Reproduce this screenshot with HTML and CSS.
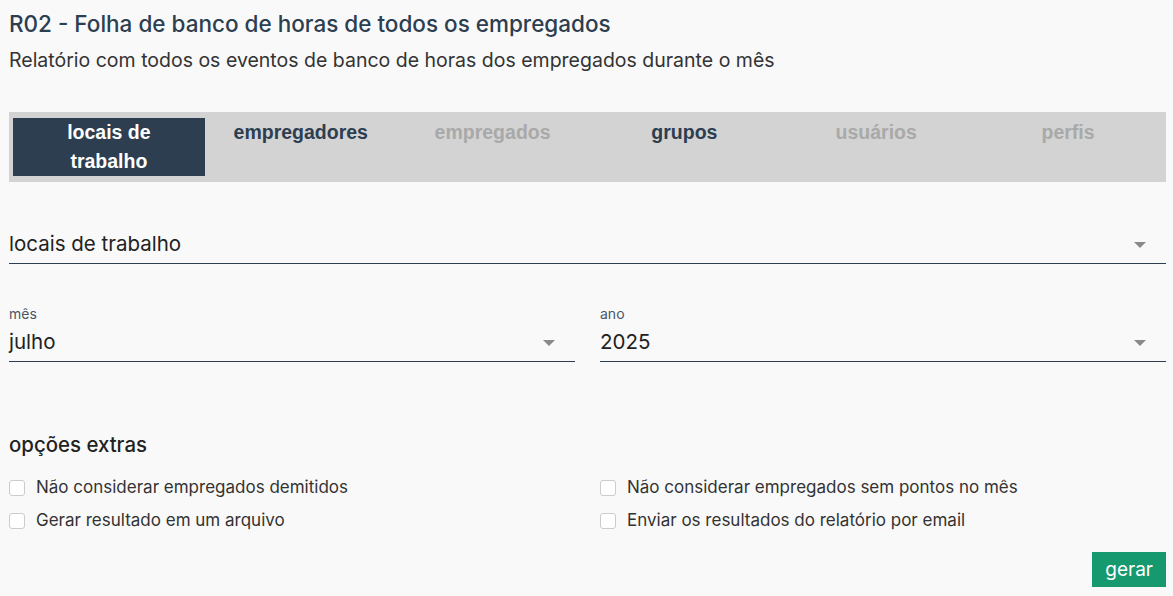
FILE: index.html
```html
<!DOCTYPE html>
<html lang="pt">
<head>
    <meta charset="UTF-8">
    <meta name="viewport" content="width=device-width, initial-scale=1.0">
    <title>R02 - Folha de banco de horas</title>
    <link rel="stylesheet" href="styles.css">
</head>
<body>
    <div class="page">
        <header class="header">
            <h1>R02 - Folha de banco de horas de todos os empregados</h1>
            <p>Relatório com todos os eventos de banco de horas dos empregados durante o mês</p>
        </header>

        <nav class="tabs">
            <div class="tab active">locais de trabalho</div>
            <div class="tab">empregadores</div>
            <div class="tab disabled">empregados</div>
            <div class="tab">grupos</div>
            <div class="tab disabled">usuários</div>
            <div class="tab disabled">perfis</div>
        </nav>

        <div class="field field-main">
            <div class="select">
                <span>locais de trabalho</span>
                <span class="arrow"></span>
            </div>
        </div>

        <div class="row">
            <div class="field">
                <label>mês</label>
                <div class="select">
                    <span>julho</span>
                    <span class="arrow"></span>
                </div>
            </div>
            <div class="field">
                <label>ano</label>
                <div class="select">
                    <span>2025</span>
                    <span class="arrow"></span>
                </div>
            </div>
        </div>

        <section class="extras">
            <h2>opções extras</h2>
            <div class="options">
                <label class="check"><span class="box"></span>Não considerar empregados demitidos</label>
                <label class="check"><span class="box"></span>Não considerar empregados sem pontos no mês</label>
                <label class="check"><span class="box"></span>Gerar resultado em um arquivo</label>
                <label class="check"><span class="box"></span>Enviar os resultados do relatório por email</label>
            </div>
        </section>

        <div class="actions">
            <button class="btn">gerar</button>
        </div>
    </div>
</body>
</html>
```

FILE: styles.css
```css
* {
    margin: 0;
    padding: 0;
    box-sizing: border-box;
}

body {
    font-family: Inter, 'Noto Sans', sans-serif;
    background: #f9f9f9;
    color: #333;
}

.page {
    padding: 8px 7px 0 9px;
}

/* cabeçalho */
.header h1 {
    font-size: 22.5px;
    font-weight: 500;
    color: #2c3e50;
    line-height: 32px;
}

.header p {
    font-size: 19.5px;
    line-height: 30px;
    margin-top: 5px;
    color: #333;
}

/* abas */
.tabs {
    display: flex;
    background: #d3d3d3;
    padding: 6px 2px 6px 4px;
    margin-top: 37px;
}

.tab {
    flex: 1 1 0;
    min-width: 0;
    text-align: center;
    font-family: 'Liberation Sans', Arial, sans-serif;
    font-weight: bold;
    font-size: 19.5px;
    line-height: 29px;
    color: #2c3e50;
    padding: 0 22px;
    min-height: 58px;
}

.tab.active {
    background: #2c3e50;
    color: #fff;
}

.tab.disabled {
    color: #a9a9a9;
}

/* campos */
.field-main {
    margin-top: 49px;
}

.select {
    display: flex;
    align-items: flex-end;
    justify-content: space-between;
    border-bottom: 1px solid #2c3e50;
    padding-bottom: 6px;
    font-size: 20.5px;
    line-height: 26px;
    color: #222;
}

.arrow {
    width: 0;
    height: 0;
    border-left: 6px solid transparent;
    border-right: 6px solid transparent;
    border-top: 6px solid #8a8a8a;
    margin: 0 20px 9px 0;
}

.row {
    display: flex;
    gap: 25px;
    margin-top: 41px;
}

.row .field {
    flex: 1;
}

.field label {
    display: block;
    font-size: 14px;
    color: #4a5568;
    line-height: 18px;
    margin-bottom: 6px;
}

/* opções extras */
.extras {
    margin-top: 70px;
}

.extras h2 {
    font-size: 20.4px;
    font-weight: 500;
    color: #222;
    line-height: 26px;
}

.options {
    display: grid;
    grid-template-columns: 1fr 1fr;
    column-gap: 25px;
    row-gap: 8px;
    margin-top: 17px;
}

.check {
    display: flex;
    align-items: center;
    font-size: 17px;
    line-height: 25px;
    color: #333;
}

.box {
    width: 16px;
    height: 16px;
    border: 1px solid #ccc;
    border-radius: 3px;
    background: #fff;
    margin-right: 11px;
}

.actions {
    display: flex;
    justify-content: flex-end;
    margin-top: 19px;
}

.btn {
    background: #16996e;
    color: #fff;
    border: none;
    font-family: inherit;
    font-size: 19px;
    padding: 0 13px;
    height: 35px;
    cursor: pointer;
}
```
